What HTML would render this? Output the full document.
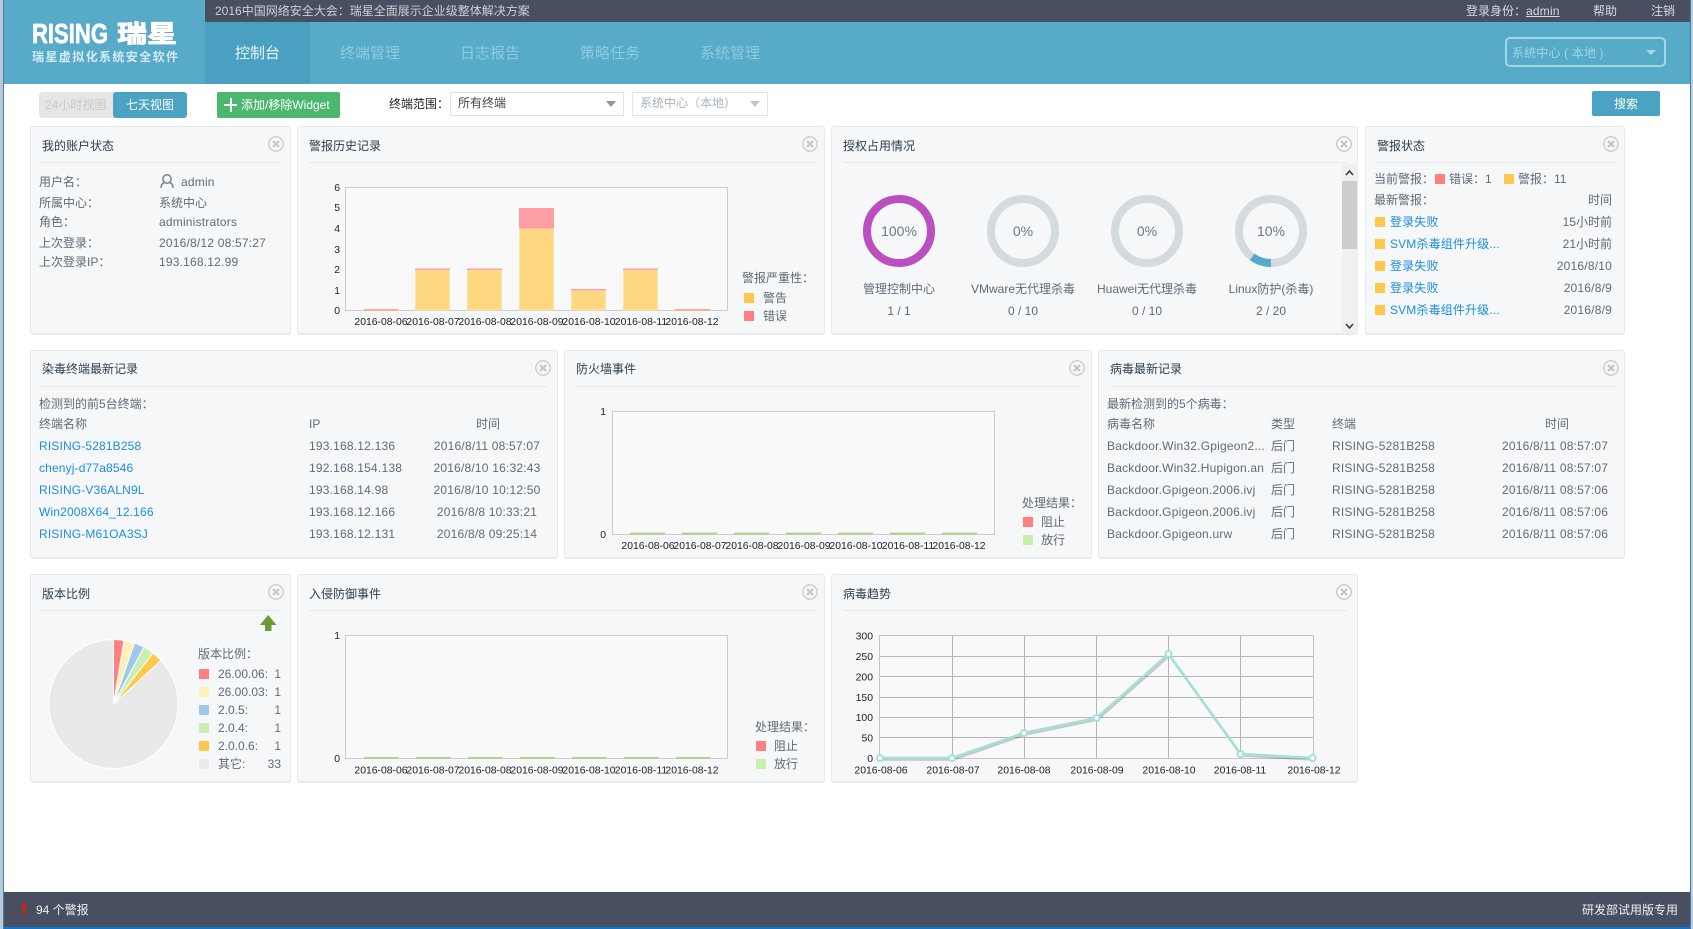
<!DOCTYPE html>
<html lang="zh"><head><meta charset="utf-8"><title>瑞星虚拟化系统安全软件</title>
<style>
html,body{margin:0;padding:0;background:#fff}
#p{position:relative;width:1693px;height:929px;overflow:hidden;background:#fff;font:12px/16px "Liberation Sans","Noto Sans CJK SC",sans-serif;color:#5f6b76}
#p div,#p span.t,#p a{position:absolute;white-space:nowrap}
.t{line-height:16px}
a{color:#1c8de0;text-decoration:none;letter-spacing:.15px}
.n{letter-spacing:.2px}
.pn{background:#f5f7f9;border:1px solid #e6eaee;border-bottom-width:2px;border-radius:3px;box-sizing:border-box}
.hr{height:1px;background:#e6e9ec}
.ti{color:#2f3d49;line-height:16px}
.sw{width:10px;height:10px}
.r{text-align:right}
.c{text-align:center}
svg{position:absolute;left:0;top:0}
</style></head><body><div id="p">
<div style="left:0;top:0;width:3px;height:929px;background:#c4c6c8"></div>
<div style="left:3px;top:0;width:1px;height:929px;background:#1e88d8"></div>
<div style="left:1690px;top:0;width:1px;height:929px;background:#1e88d8"></div>
<div style="left:1691px;top:0;width:2px;height:929px;background:#c9cbcd"></div>
<div style="left:4px;top:927px;width:1686px;height:2px;background:#0a78d0"></div>

<div style="left:4px;top:0;width:1686px;height:84px;background:#57abc9"></div>
<div style="left:205px;top:0;width:1485px;height:22px;background:#474f60"></div>
<div style="left:205px;top:22px;width:105px;height:62px;background:#4aa0c0"></div>
<span class="t" style="left:215px;top:3px;color:#ccd0d4">2016中国网络安全大会：瑞星全面展示企业级整体解决方案</span>
<span class="t" style="left:1466px;top:3px;color:#d8dadd">登录身份：</span>
<span class="t n" style="left:1526px;top:3px;color:#d8dadd;text-decoration:underline">admin</span>
<span class="t" style="left:1593px;top:3px;color:#d8dadd">帮助</span>
<span class="t" style="left:1651px;top:3px;color:#d8dadd">注销</span>

<span class="t" style="left:235px;top:46px;font-size:15px;color:#eaf6fa">控制台</span>
<span class="t" style="left:340px;top:46px;font-size:15px;color:#8cccdf">终端管理</span>
<span class="t" style="left:460px;top:46px;font-size:15px;color:#8cccdf">日志报告</span>
<span class="t" style="left:580px;top:46px;font-size:15px;color:#8cccdf">策略任务</span>
<span class="t" style="left:700px;top:46px;font-size:15px;color:#8cccdf">系统管理</span>

<div style="left:1505px;top:37px;width:161px;height:30px;box-sizing:border-box;border:2px solid #a5d6e6;border-radius:5px"></div>
<span class="t" style="left:1512px;top:45px;color:#9fd6e6;letter-spacing:.15px">系统中心 ( 本地 )</span>
<div style="left:1646px;top:50px;border:5px solid transparent;border-top:5px solid #a5d6e6;border-bottom:0"></div>

<!-- toolbar -->
<div style="left:39px;top:92px;width:76px;height:26px;background:#e6e6e6;border-radius:4px 0 0 4px"></div>
<span class="t" style="left:45px;top:97px;color:#c8c8c8">24小时视图</span>
<div style="left:113px;top:92px;width:74px;height:26px;background:#4aa3c2;border-radius:3px"></div>
<span class="t" style="left:126px;top:97px;color:#fff">七天视图</span>
<div style="left:217px;top:92px;width:123px;height:26px;background:#4cb86e;border-radius:2px"></div>
<div style="left:224px;top:104px;width:13px;height:2px;background:#fff"></div>
<div style="left:230px;top:98px;width:2px;height:14px;background:#fff"></div>
<span class="t" style="left:241px;top:97px;color:#fff">添加/移除Widget</span>
<span class="t" style="left:389px;top:96px;color:#222">终端范围：</span>
<div style="left:450px;top:92px;width:174px;height:24px;box-sizing:border-box;background:#fff;border:1px solid #dfe2e5"></div>
<span class="t" style="left:458px;top:95px;color:#444">所有终端</span>
<div style="left:606px;top:101px;border:5px solid transparent;border-top:6px solid #8c97a0;border-bottom:0"></div>
<div style="left:632px;top:92px;width:136px;height:24px;box-sizing:border-box;background:#fff;border:1px solid #e2e5e8"></div>
<span class="t" style="left:640px;top:95px;color:#aab2b8">系统中心（本地）</span>
<div style="left:750px;top:101px;border:5px solid transparent;border-top:6px solid #b5c8d2;border-bottom:0"></div>
<div style="left:1592px;top:91px;width:68px;height:25px;background:#4aa3c2;border-radius:2px"></div>
<span class="t" style="left:1614px;top:96px;color:#fff">搜索</span>

<!-- panels row 1 -->
<div class="pn" style="left:30px;top:126px;width:261px;height:209px"></div>
<div class="pn" style="left:297px;top:126px;width:528px;height:209px"></div>
<div class="pn" style="left:831px;top:126px;width:527px;height:209px"></div>
<div class="pn" style="left:1365px;top:126px;width:260px;height:209px"></div>
<!-- row 2 -->
<div class="pn" style="left:30px;top:350px;width:528px;height:209px"></div>
<div class="pn" style="left:564px;top:350px;width:528px;height:209px"></div>
<div class="pn" style="left:1098px;top:350px;width:527px;height:209px"></div>
<!-- row 3 -->
<div class="pn" style="left:30px;top:574px;width:261px;height:209px"></div>
<div class="pn" style="left:297px;top:574px;width:528px;height:209px"></div>
<div class="pn" style="left:831px;top:574px;width:527px;height:209px"></div>

<div class="hr" style="left:42px;top:162px;width:239px"></div>
<div class="hr" style="left:309px;top:162px;width:505px"></div>
<div class="hr" style="left:843px;top:162px;width:505px"></div>
<div class="hr" style="left:1377px;top:162px;width:238px"></div>
<div class="hr" style="left:42px;top:386px;width:505px"></div>
<div class="hr" style="left:576px;top:386px;width:505px"></div>
<div class="hr" style="left:1110px;top:386px;width:506px"></div>
<div class="hr" style="left:42px;top:610px;width:239px"></div>
<div class="hr" style="left:309px;top:610px;width:505px"></div>
<div class="hr" style="left:843px;top:610px;width:505px"></div>

<span class="t ti" style="left:42px;top:137.5px">我的账户状态</span>
<span class="t ti" style="left:309px;top:137.5px">警报历史记录</span>
<span class="t ti" style="left:843px;top:137.5px">授权占用情况</span>
<span class="t ti" style="left:1377px;top:137.5px">警报状态</span>
<span class="t ti" style="left:42px;top:361px">染毒终端最新记录</span>
<span class="t ti" style="left:576px;top:361px">防火墙事件</span>
<span class="t ti" style="left:1110px;top:361px">病毒最新记录</span>
<span class="t ti" style="left:42px;top:585.5px">版本比例</span>
<span class="t ti" style="left:309px;top:585.5px">入侵防御事件</span>
<span class="t ti" style="left:843px;top:585.5px">病毒趋势</span>

<!-- account -->
<span class="t" style="left:39px;top:174px">用户名：</span><span class="t n" style="left:181px;top:174px">admin</span>
<span class="t" style="left:39px;top:194.5px">所属中心：</span><span class="t" style="left:159px;top:194.5px">系统中心</span>
<span class="t" style="left:39px;top:214px">角色：</span><span class="t n" style="left:159px;top:214px">administrators</span>
<span class="t" style="left:39px;top:234.5px">上次登录：</span><span class="t n" style="left:159px;top:234.5px">2016/8/12 08:57:27</span>
<span class="t" style="left:39px;top:254px">上次登录IP：</span><span class="t n" style="left:159px;top:254px">193.168.12.99</span>

<!-- legend 1 -->
<span class="t" style="left:742px;top:270px">警报严重性：</span>
<div class="sw" style="left:744px;top:293px;background:#ffc84b"></div><span class="t" style="left:763px;top:290px">警告</span>
<div class="sw" style="left:744px;top:311px;background:#ff8080"></div><span class="t" style="left:763px;top:308px">错误</span>

<!-- license labels -->
<div class="c" style="left:839px;top:281px;width:120px">管理控制中心</div>
<div class="c" style="left:839px;top:303px;width:120px">1 / 1</div>
<div class="c" style="left:963px;top:281px;width:120px">VMware无代理杀毒</div>
<div class="c" style="left:963px;top:303px;width:120px">0 / 10</div>
<div class="c" style="left:1087px;top:281px;width:120px">Huawei无代理杀毒</div>
<div class="c" style="left:1087px;top:303px;width:120px">0 / 10</div>
<div class="c" style="left:1211px;top:281px;width:120px">Linux防护(杀毒)</div>
<div class="c" style="left:1211px;top:303px;width:120px">2 / 20</div>
<div style="left:1342px;top:164px;width:15px;height:170px;background:#f0f0f0"></div>
<div style="left:1342px;top:181px;width:15px;height:68px;background:#cdcdcd"></div>

<!-- alerts -->
<span class="t" style="left:1374px;top:171px">当前警报：</span>
<div class="sw" style="left:1435px;top:174px;background:#ff8080"></div><span class="t" style="left:1449px;top:171px">错误：1</span>
<div class="sw" style="left:1504px;top:174px;background:#ffc84b"></div><span class="t" style="left:1518px;top:171px">警报：11</span>
<span class="t" style="left:1374px;top:192px">最新警报：</span><div class="r" style="left:1512px;top:192px;width:100px">时间</div>
<div class="sw" style="left:1375px;top:217px;background:#ffc84b"></div><a style="left:1390px;top:214px">登录失败</a><div class="r" style="left:1512px;top:214px;width:100px">15小时前</div>
<div class="sw" style="left:1375px;top:239px;background:#ffc84b"></div><a style="left:1390px;top:236px">SVM杀毒组件升级...</a><div class="r" style="left:1512px;top:236px;width:100px">21小时前</div>
<div class="sw" style="left:1375px;top:261px;background:#ffc84b"></div><a style="left:1390px;top:258px">登录失败</a><div class="r n" style="left:1512px;top:258px;width:100px">2016/8/10</div>
<div class="sw" style="left:1375px;top:283px;background:#ffc84b"></div><a style="left:1390px;top:280px">登录失败</a><div class="r n" style="left:1512px;top:280px;width:100px">2016/8/9</div>
<div class="sw" style="left:1375px;top:305px;background:#ffc84b"></div><a style="left:1390px;top:302px">SVM杀毒组件升级...</a><div class="r n" style="left:1512px;top:302px;width:100px">2016/8/9</div>

<!-- infected -->
<span class="t" style="left:39px;top:396px">检测到的前5台终端：</span>
<span class="t" style="left:39px;top:416px">终端名称</span><span class="t" style="left:309px;top:416px">IP</span><div class="c" style="left:448px;top:416px;width:80px">时间</div>
<a style="left:39px;top:438px">RISING-5281B258</a><span class="t n" style="left:309px;top:438px">193.168.12.136</span><div class="c n" style="left:427px;top:438px;width:120px">2016/8/11 08:57:07</div>
<a style="left:39px;top:460px">chenyj-d77a8546</a><span class="t n" style="left:309px;top:460px">192.168.154.138</span><div class="c n" style="left:427px;top:460px;width:120px">2016/8/10 16:32:43</div>
<a style="left:39px;top:482px">RISING-V36ALN9L</a><span class="t n" style="left:309px;top:482px">193.168.14.98</span><div class="c n" style="left:427px;top:482px;width:120px">2016/8/10 10:12:50</div>
<a style="left:39px;top:504px">Win2008X64_12.166</a><span class="t n" style="left:309px;top:504px">193.168.12.166</span><div class="c n" style="left:427px;top:504px;width:120px">2016/8/8 10:33:21</div>
<a style="left:39px;top:526px">RISING-M61OA3SJ</a><span class="t n" style="left:309px;top:526px">193.168.12.131</span><div class="c n" style="left:427px;top:526px;width:120px">2016/8/8 09:25:14</div>

<!-- virus -->
<span class="t" style="left:1107px;top:396px">最新检测到的5个病毒：</span>
<span class="t" style="left:1107px;top:416px">病毒名称</span><span class="t" style="left:1271px;top:416px">类型</span><span class="t" style="left:1332px;top:416px">终端</span><div class="c" style="left:1517px;top:416px;width:80px">时间</div>
<span class="t n" style="left:1107px;top:438px">Backdoor.Win32.Gpigeon2...</span><span class="t" style="left:1271px;top:438px">后门</span><span class="t n" style="left:1332px;top:438px">RISING-5281B258</span><span class="t n" style="left:1502px;top:438px">2016/8/11 08:57:07</span>
<span class="t n" style="left:1107px;top:460px">Backdoor.Win32.Hupigon.an</span><span class="t" style="left:1271px;top:460px">后门</span><span class="t n" style="left:1332px;top:460px">RISING-5281B258</span><span class="t n" style="left:1502px;top:460px">2016/8/11 08:57:07</span>
<span class="t n" style="left:1107px;top:482px">Backdoor.Gpigeon.2006.ivj</span><span class="t" style="left:1271px;top:482px">后门</span><span class="t n" style="left:1332px;top:482px">RISING-5281B258</span><span class="t n" style="left:1502px;top:482px">2016/8/11 08:57:06</span>
<span class="t n" style="left:1107px;top:504px">Backdoor.Gpigeon.2006.ivj</span><span class="t" style="left:1271px;top:504px">后门</span><span class="t n" style="left:1332px;top:504px">RISING-5281B258</span><span class="t n" style="left:1502px;top:504px">2016/8/11 08:57:06</span>
<span class="t n" style="left:1107px;top:526px">Backdoor.Gpigeon.urw</span><span class="t" style="left:1271px;top:526px">后门</span><span class="t n" style="left:1332px;top:526px">RISING-5281B258</span><span class="t n" style="left:1502px;top:526px">2016/8/11 08:57:06</span>

<!-- legends -->
<span class="t" style="left:1022px;top:495px">处理结果：</span>
<div class="sw" style="left:1023px;top:517px;background:#ff8080"></div><span class="t" style="left:1041px;top:514px">阻止</span>
<div class="sw" style="left:1023px;top:535px;background:#c6efb0"></div><span class="t" style="left:1041px;top:532px">放行</span>
<span class="t" style="left:755px;top:719px">处理结果：</span>
<div class="sw" style="left:756px;top:741px;background:#ff8080"></div><span class="t" style="left:774px;top:738px">阻止</span>
<div class="sw" style="left:756px;top:759px;background:#c6efb0"></div><span class="t" style="left:774px;top:756px">放行</span>

<span class="t" style="left:198px;top:646px">版本比例：</span>
<div class="sw" style="left:199px;top:669px;background:#ff8080"></div><span class="t" style="left:218px;top:666px">26.00.06:</span><div class="r" style="left:261px;top:666px;width:20px">1</div>
<div class="sw" style="left:199px;top:687px;background:#fff0b5"></div><span class="t" style="left:218px;top:684px">26.00.03:</span><div class="r" style="left:261px;top:684px;width:20px">1</div>
<div class="sw" style="left:199px;top:705px;background:#a0c8e8"></div><span class="t" style="left:218px;top:702px">2.0.5:</span><div class="r" style="left:261px;top:702px;width:20px">1</div>
<div class="sw" style="left:199px;top:723px;background:#c6efb0"></div><span class="t" style="left:218px;top:720px">2.0.4:</span><div class="r" style="left:261px;top:720px;width:20px">1</div>
<div class="sw" style="left:199px;top:741px;background:#ffc84b"></div><span class="t" style="left:218px;top:738px">2.0.0.6:</span><div class="r" style="left:261px;top:738px;width:20px">1</div>
<div class="sw" style="left:199px;top:759px;background:#ebebeb"></div><span class="t" style="left:218px;top:756px">其它:</span><div class="r" style="left:261px;top:756px;width:20px">33</div>

<!-- footer -->
<div style="left:4px;top:892px;width:1686px;height:35px;background:#474f60"></div>
<span class="t" style="left:36px;top:902px;color:#eef0f2">94 个警报</span>
<span class="t" style="left:1582px;top:902px;color:#eef0f2">研发部试用版专用</span>

<svg width="1693" height="929" viewBox="0 0 1693 929" font-family="'Liberation Sans','Noto Sans CJK SC',sans-serif">
<defs>
<g id="x"><circle r="7.2" fill="none" stroke="#cdd0d3" stroke-width="1.5"/><path d="M-3-3L3 3M3-3L-3 3" stroke="#c4c7ca" stroke-width="2.2"/></g>
<g id="dt" font-size="10.4" fill="#222" text-anchor="middle">
<text x="0" y="0">2016-08-06</text><text x="52" y="0">2016-08-07</text><text x="104" y="0">2016-08-08</text><text x="156" y="0">2016-08-09</text><text x="208" y="0">2016-08-10</text><text x="260" y="0">2016-08-11</text><text x="311" y="0">2016-08-12</text>
</g>
<g id="gb" fill="#b9cf8e"><rect x="0" y="0" width="35" height="2"/><rect x="52" y="0" width="35" height="2"/><rect x="104" y="0" width="35" height="2"/><rect x="156" y="0" width="35" height="2"/><rect x="208" y="0" width="35" height="2"/><rect x="260" y="0" width="35" height="2"/><rect x="312" y="0" width="35" height="2"/></g>
</defs>

<!-- logo -->
<text x="32" y="43" font-size="28" font-weight="700" fill="#fff" stroke="#fff" stroke-width=".7" textLength="76" lengthAdjust="spacingAndGlyphs">RISING</text>
<text x="117" y="42" font-size="24" font-weight="700" fill="#fff" stroke="#fff" stroke-width=".9" font-family="'Noto Sans CJK SC',sans-serif" textLength="60" lengthAdjust="spacingAndGlyphs">瑞星</text>
<text x="32" y="61" font-size="12" font-weight="700" fill="#d5ebf2" font-family="'Noto Sans CJK SC',sans-serif" textLength="146">瑞星虚拟化系统安全软件</text>

<!-- exclamation -->
<path d="M22 903h4l-.8 10h-2.4zM22.8 914.5h2.4v2.5h-2.4z" fill="#e01818"/>

<!-- close icons -->
<use href="#x" x="276" y="144"/><use href="#x" x="810" y="144"/><use href="#x" x="1344" y="144"/><use href="#x" x="1611" y="144"/>
<use href="#x" x="543" y="368"/><use href="#x" x="1077" y="368"/><use href="#x" x="1611" y="368"/>
<use href="#x" x="276" y="592"/><use href="#x" x="810" y="592"/><use href="#x" x="1344" y="592"/>

<!-- person -->
<g fill="none" stroke="#77828c" stroke-width="1.5"><circle cx="167" cy="179" r="4.2"/><path d="M161 188c0-4 2-5 3.5-5.5M173 188c0-4-2-5-3.5-5.5"/></g>

<!-- chart 1 -->
<rect x="345.5" y="187.5" width="382" height="123" fill="#f9f9f9" stroke="#cccccc"/>
<g fill="#fed880" stroke="#ffe3a6"><rect x="415.5" y="270" width="34" height="40"/><rect x="467.5" y="270" width="34" height="40"/><rect x="519.5" y="228.5" width="34" height="81.5"/><rect x="571.5" y="290.5" width="34" height="19.5"/><rect x="623.5" y="270" width="34" height="40"/></g>
<g fill="#ff9fa3"><rect x="415" y="268.5" width="35" height="1.5"/><rect x="467" y="268.5" width="35" height="1.5"/><rect x="519" y="208" width="35" height="20.5"/><rect x="571" y="289" width="35" height="1.5"/><rect x="623" y="268.5" width="35" height="1.5"/></g>
<rect x="364" y="309" width="34" height="2" fill="#ffab8c"/><rect x="675" y="309" width="35" height="2" fill="#ffab8c"/>
<g font-size="10.4" fill="#222" text-anchor="end"><text x="340" y="191">6</text><text x="340" y="211">5</text><text x="340" y="232">4</text><text x="340" y="253">3</text><text x="340" y="273">2</text><text x="340" y="294">1</text><text x="340" y="314">0</text></g>
<use href="#dt" x="381" y="325"/>

<!-- donuts -->
<g fill="none" stroke-width="8">
<circle cx="899" cy="231" r="32" stroke="#bb4fbf"/>
<circle cx="1023" cy="231" r="32" stroke="#d4dbde"/>
<circle cx="1147" cy="231" r="32" stroke="#d4dbde"/>
<circle cx="1271" cy="231" r="32" stroke="#d4dbde"/>
<path d="M1271 263A32 32 0 0 1 1252.2 256.9" stroke="#56a9c9"/>
</g>
<g font-size="14" fill="#6b7885" text-anchor="middle"><text x="899" y="236">100%</text><text x="1023" y="236">0%</text><text x="1147" y="236">0%</text><text x="1271" y="236">10%</text></g>
<path d="M1346 175l3.5-4 3.5 4" fill="none" stroke="#333" stroke-width="1.5"/>
<path d="M1346 324l3.5 4 3.5-4" fill="none" stroke="#333" stroke-width="1.5"/>

<!-- firewall -->
<rect x="612.5" y="411.5" width="382" height="123" fill="#f9f9f9" stroke="#cccccc"/>
<use href="#gb" x="630" y="532.5"/>
<g font-size="10.4" fill="#222" text-anchor="end"><text x="606" y="415">1</text><text x="606" y="538">0</text></g>
<use href="#dt" x="648" y="549"/>

<!-- pie -->
<g stroke="#fff" stroke-width="1">
<circle cx="113.5" cy="704" r="64.5" fill="#e9e9e9"/>
<path d="M113.5 704V639.5A64.5 64.5 0 0 1 124.1 640.4Z" fill="#ff8080"/>
<path d="M113.5 704L124.1 640.4A64.5 64.5 0 0 1 134.5 643Z" fill="#fff0b5"/>
<path d="M113.5 704L134.5 643A64.5 64.5 0 0 1 144.1 647.2Z" fill="#a0c8e8"/>
<path d="M113.5 704L144.1 647.2A64.5 64.5 0 0 1 153 653Z" fill="#c6efb0"/>
<path d="M113.5 704L153 653A64.5 64.5 0 0 1 161 660.5Z" fill="#ffc84b"/>
</g>
<path d="M268.2 615L276.5 625H271.5V631H265V625H260Z" fill="#6a9b35"/>

<!-- ips -->
<rect x="345.5" y="635.5" width="382" height="123" fill="#f9f9f9" stroke="#cccccc"/>
<use href="#gb" x="364" y="757"/>
<g font-size="10.4" fill="#222" text-anchor="end"><text x="340" y="639">1</text><text x="340" y="762">0</text></g>
<use href="#dt" x="381" y="773.5"/>

<!-- line chart -->
<rect x="879.5" y="635.5" width="434" height="123" fill="#f9f9f9" stroke="#c4c4c4"/>
<g stroke="#b5b5b5" stroke-width="1"><path d="M880 656.5H1313M880 676.5H1313M880 697.5H1313M880 717.5H1313M880 737.5H1313"/><path d="M952.5 636V758M1024.5 636V758M1096.5 636V758M1168.5 636V758M1240.5 636V758"/></g>
<polyline points="880,758 952,758 1024,733 1096.5,718 1168.5,654 1240.6,754 1312.6,758" fill="none" stroke="#000" stroke-opacity=".2" stroke-width="2.5" transform="translate(1 1.5)"/>
<polyline points="880,758 952,758 1024,733 1096.5,718 1168.5,654 1240.6,754 1312.6,758" fill="none" stroke="#a2e0d8" stroke-width="2.5"/>
<g fill="#fff" stroke="#a2e0d8" stroke-width="2"><circle cx="880" cy="758" r="3"/><circle cx="952" cy="758" r="3"/><circle cx="1024" cy="733" r="3"/><circle cx="1096.5" cy="718" r="3"/><circle cx="1168.5" cy="654" r="3"/><circle cx="1240.6" cy="754" r="3"/><circle cx="1312.6" cy="758" r="3"/></g>
<g font-size="10.4" fill="#222" text-anchor="end"><text x="873" y="639.5">300</text><text x="873" y="660">250</text><text x="873" y="680.5">200</text><text x="873" y="701">150</text><text x="873" y="721">100</text><text x="873" y="741.5">50</text><text x="873" y="762">0</text></g>
<g font-size="10.4" fill="#222" text-anchor="middle"><text x="881" y="773.5">2016-08-06</text><text x="953" y="773.5">2016-08-07</text><text x="1024" y="773.5">2016-08-08</text><text x="1097" y="773.5">2016-08-09</text><text x="1169" y="773.5">2016-08-10</text><text x="1240" y="773.5">2016-08-11</text><text x="1314" y="773.5">2016-08-12</text></g>
</svg>
</div></body></html>
